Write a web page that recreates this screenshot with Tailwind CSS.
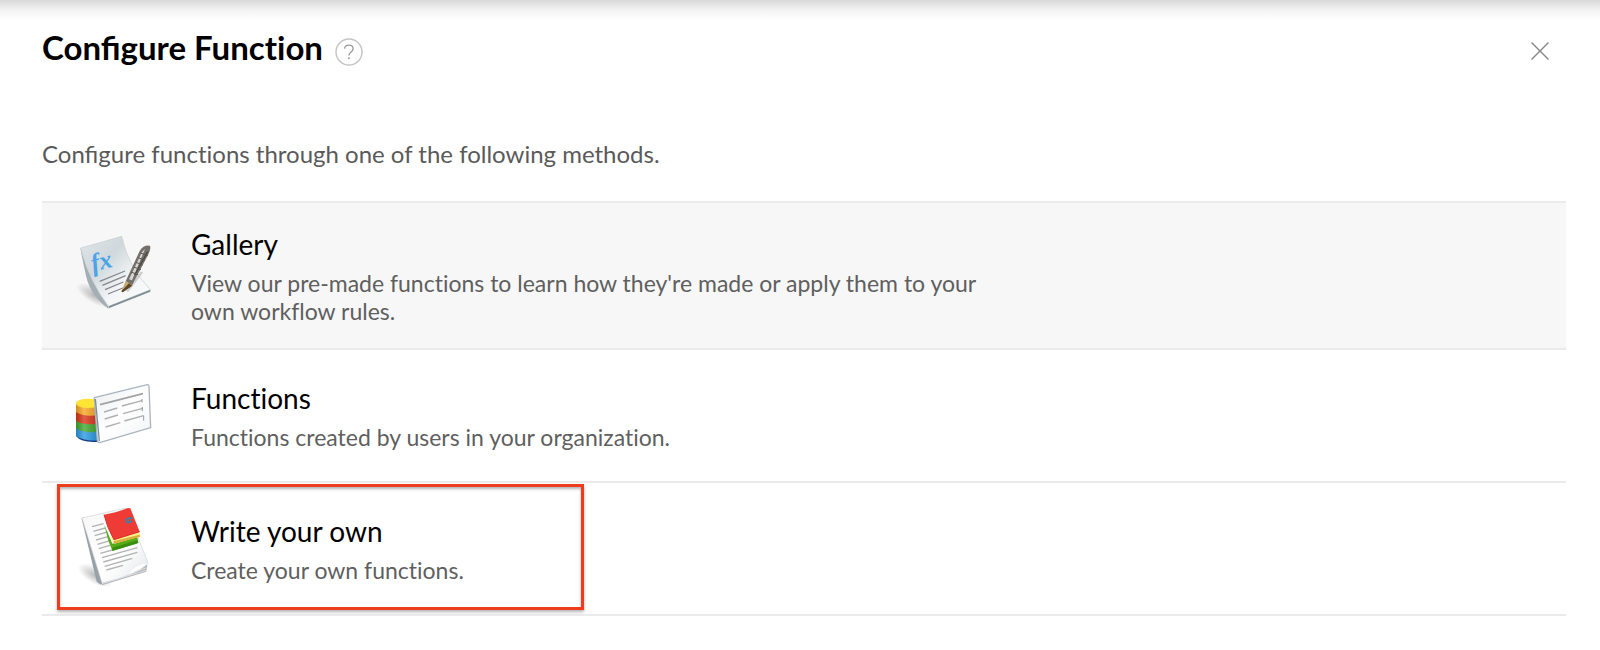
<!DOCTYPE html>
<html lang="en">
    <head>
        <meta charset="utf-8" />
        <title>Configure Function</title>
        <meta name="viewport" content="width=device-width, initial-scale=1" />
        <script src="https://cdn.jsdelivr.net/npm/@tailwindcss/browser@4"></script>
    </head>
    <body class="bg-white font-['Lato',sans-serif] text-black [font-variant-ligatures:none]">
        <div class="h-5 bg-linear-to-b from-[#d8d8d8] via-[#f3f3f3] to-white"></div>
        <main class="pl-[42px] pr-[34px] pb-8">
            <header class="flex items-center pt-[7px]">
                <h1 class="text-[33px] leading-10 font-bold"><span class="[font-variant-ligatures:common-ligatures]">Configure</span> Function</h1>
                <button type="button" aria-label="Help" class="ml-3 mt-2.5">
                    <svg class="block" width="28" height="28" viewBox="0 0 28 28" fill="none">
                        <circle cx="14" cy="14" r="13" stroke="#c4c4c4" stroke-width="1.4" />
                        <path d="M9.6 10.6C9.8 8.4 11.5 7.2 13.8 7.2c2.600 0 4.300 1.300 4.300 3.500 0 3.300-4.200 3.200-4.200 6.800" stroke="#999" stroke-width="1.300" />
                        <circle cx="13.900" cy="20.300" r="1" fill="#999" />
                    </svg>
                </button>
                <button type="button" aria-label="Close" class="ml-auto mr-4 mt-2">
                    <svg class="block" width="20" height="20" viewBox="0 0 20 20">
                        <path d="M1.500 1.500l17 17M18.500 1.500l-17 17" stroke="#858585" stroke-width="1.400" />
                    </svg>
                </button>
            </header>

            <p class="mt-[71px] text-2xl leading-8 text-[#5a5a5a]"><span class="[font-variant-ligatures:common-ligatures]">Configure</span> functions through one of the following methods.</p>

            <ul class="mt-[31px] border-t-2 border-[#ebebeb]">
                <li class="border-b-2 border-[#ebebeb] bg-[#f7f7f7]">
                    <a href="#gallery" class="flex min-h-[145px] items-center gap-[21px] pl-[18px]">
                        <svg class="shrink-0" width="110" height="100" viewBox="0 16 330 300">
                            <defs>
                                <linearGradient id="sheet" x1="0" y1="0" x2="1" y2="1">
                                    <stop offset="0" stop-color="#dfe6e9" />
                                    <stop offset=".35" stop-color="#cfd8dc" />
                                    <stop offset=".65" stop-color="#f4f6f7" />
                                    <stop offset="1" stop-color="#fafbfb" />
                                </linearGradient>
                                <radialGradient id="shade">
                                    <stop offset="0" stop-color="#777" stop-opacity=".5" />
                                    <stop offset="1" stop-color="#777" stop-opacity="0" />
                                </radialGradient>
                            </defs>
                            <ellipse cx="104" cy="224" rx="62" ry="24" transform="rotate(30 104 224)" fill="url(#shade)" />
                            <path d="M62 82Q82 168 145 258v6Q92 226 78 165Q70 130 62 88z" fill="#a3afb4" />
                            <path d="M62 82Q122 66 185 47Q205 140 271 207L146 257Q92 190 62 82z" fill="url(#sheet)" stroke="#c4cccf" stroke-width="2" />
                            <path d="M146 257l125-50v6l-125 50z" fill="#7f8d93" />
                            <text x="99" y="153" transform="rotate(-14 99 153)" font-family="Liberation Serif, serif" font-size="76" font-style="italic" font-weight="bold" fill="#4ba3e8">fx</text>
                            <path d="M119 182l76-31M127 194l70-29M135 207l55-23M144 220l52-21" stroke="#85878b" stroke-width="4" />
                            <path d="M201 212l45-58" stroke="#b5b5b5" stroke-width="8" opacity=".6" />
                            <path d="M197 182L239 91Q251 72 269 75Q275 81 264 103L216 194z" fill="#75706b" />
                            <path d="M207 176l39-82 9-9-39 94z" fill="#d8d6d2" />
                            <path d="M224 163l39-70" stroke="#4a4643" stroke-width="4" />
                            <path d="M221 139l22 8M228 125l20 8M235 111l20 8M242 97l21 8M213 154l21 8" stroke="#5a5550" stroke-width="3" />
                            <path d="M197 181l20 13-28 21-5-3z" fill="#c7ad72" />
                            <path d="M207 188l10 7-29 20-4-3z" fill="#594727" />
                        </svg>
                        <div class="max-w-[790px]">
                            <h2 class="text-[28px] leading-9">Gallery</h2>
                            <p class="mt-[7px] text-[23px] leading-7 text-[#5f5f5f]">View our pre-made functions to learn how they're made or apply them to your own workflow rules.</p>
                        </div>
                    </a>
                </li>
                <li class="border-b-2 border-[#ebebeb]">
                    <a href="#functions" class="flex min-h-[131px] items-center gap-[21px] pl-[18px]">
                        <svg class="shrink-0" width="110" height="100" viewBox="0 -15 330 300">
                            <defs>
                                <linearGradient id="gloss" x1="0" x2="1">
                                    <stop offset="0" stop-color="#000" stop-opacity=".15" />
                                    <stop offset=".35" stop-color="#fff" stop-opacity=".2" />
                                    <stop offset="1" stop-color="#000" stop-opacity=".15" />
                                </linearGradient>
                                <linearGradient id="card" x1="0" y1="0" x2="1" y2="1">
                                    <stop offset="0" stop-color="#e9ecef" />
                                    <stop offset=".5" stop-color="#fff" />
                                    <stop offset="1" stop-color="#f1f3f5" />
                                </linearGradient>
                            </defs>
                            <path d="M48 180v15Q65 217 118 212v-20z" fill="#163e87" />
                            <path d="M48 170v24Q68 211 118 208v-32z" fill="#2c9be3" />
                            <path d="M48 148v24Q70 188 118 182v-32z" fill="#43a832" />
                            <path d="M48 123v26Q70 164 118 158v-32z" fill="#da3517" />
                            <path d="M48 97v26Q70 139 118 132V97z" fill="#f9a825" />
                            <path d="M48 97v97Q68 211 118 208V97z" fill="url(#gloss)" />
                            <ellipse cx="84" cy="97" rx="36" ry="14" fill="#ffe335" />
                            <path d="M103 80L262 41q5 0 5 5l5 124-153 45q-6 0-7-6z" fill="url(#card)" stroke="#a9b6bf" stroke-width="4" stroke-linejoin="round" />
                            <path d="M106 84l12 126" stroke="#7b8d9b" stroke-width="4" />
                            <path d="M120 101l129-33" stroke="#a3a3a3" stroke-width="5" />
                            <path d="M132 123l40-12M134 144l40-12M137 168l44-13M186 105l60-16M189 128l59-16M193 150l58-16" fill="none" stroke="#b0b0b0" stroke-width="4" />
                            <path d="M246 84v10M247 108v12M251 134v15" stroke="#999" stroke-width="3" />
                        </svg>
                        <div class="max-w-[790px]">
                            <h2 class="text-[28px] leading-9">Functions</h2>
                            <p class="mt-[7px] text-[23px] leading-7 text-[#5f5f5f]">Functions created by users in your organization.</p>
                        </div>
                    </a>
                </li>
                <li class="relative border-b-2 border-[#ebebeb]">
                    <a href="#write" class="flex min-h-[131px] items-center gap-[21px] pl-[18px]">
                        <svg class="shrink-0" width="110" height="100" viewBox="0 11 330 300">
                            <defs>
                                <linearGradient id="page" x1="0" y1="0" x2="1" y2="1">
                                    <stop offset="0" stop-color="#f7f7f7" />
                                    <stop offset=".6" stop-color="#fff" />
                                    <stop offset="1" stop-color="#e1e4e6" />
                                </linearGradient>
                            </defs>
                            <ellipse cx="105" cy="240" rx="58" ry="25" transform="rotate(30 105 240)" fill="url(#shade)" />
                            <path d="M122 255l140-48-3 22-133 41z" fill="#b4b8bb" />
                            <path d="M126 260l132-42M126 265l132-40" stroke="#eee" stroke-width="2" />
                            <path d="M65 70l6-5 59 195-8 8-12-9z" fill="#98a1a7" />
                            <path d="M66 68L198 38L264 202Q232 240 126 263z" fill="url(#page)" stroke="#cdd2d5" stroke-width="2" />
                            <path d="M264 202Q220 205 202 239Q246 224 264 202z" fill="#fff" stroke="#e2e5e6" stroke-width="2" />
                            <path d="M96 94l35-9M100 108l36-10M104 121l38-11M108 134l39-11M112 147l41-12M116 160l44-13M121 174l110-31M126 187l106-30M130 200l102-29M134 213l83-24M139 224l50-14" stroke="#b3b3b3" stroke-width="4" />
                            <path d="M133 88l12 48 12 30 78-24-3-17-75 20z" fill="#55ad18" />
                            <path d="M157 157l75-22 3 8-78 24z" fill="#388e0d" />
                            <path d="M151 125l12 20 79-22-6-16z" fill="#ffef87" />
                            <path d="M160 138l78-20 3 6-78 21z" fill="#d9af3f" />
                            <path d="M132 58q33-5 72-20l7 1 28 70-77 24q-12-18-18-38-7-21-12-37z" fill="#ef3b35" />
                            <path d="M132 58l12 38 18 37 77-24" fill="none" stroke="#d4302a" stroke-width="3" />
                            <path d="M217 67l-14 3q-6 3-3 9 3 4 9 1l7-4" fill="none" stroke="#427da3" stroke-width="6" />
                        </svg>
                        <div class="max-w-[790px]">
                            <h2 class="text-[28px] leading-9">Write your own</h2>
                            <p class="mt-[7px] text-[23px] leading-7 text-[#5f5f5f]">Create your own functions.</p>
                        </div>
                    </a>
                    <!-- highlight around the option -->
                    <div class="pointer-events-none absolute top-px bottom-1 left-[15px] w-[527px] border-3 border-[#ee3c1c] shadow-[0_2px_3px_rgba(0,0,0,0.3),inset_0_2px_3px_rgba(0,0,0,0.3)]"></div>
                </li>
            </ul>
        </main>
    </body>
</html>
